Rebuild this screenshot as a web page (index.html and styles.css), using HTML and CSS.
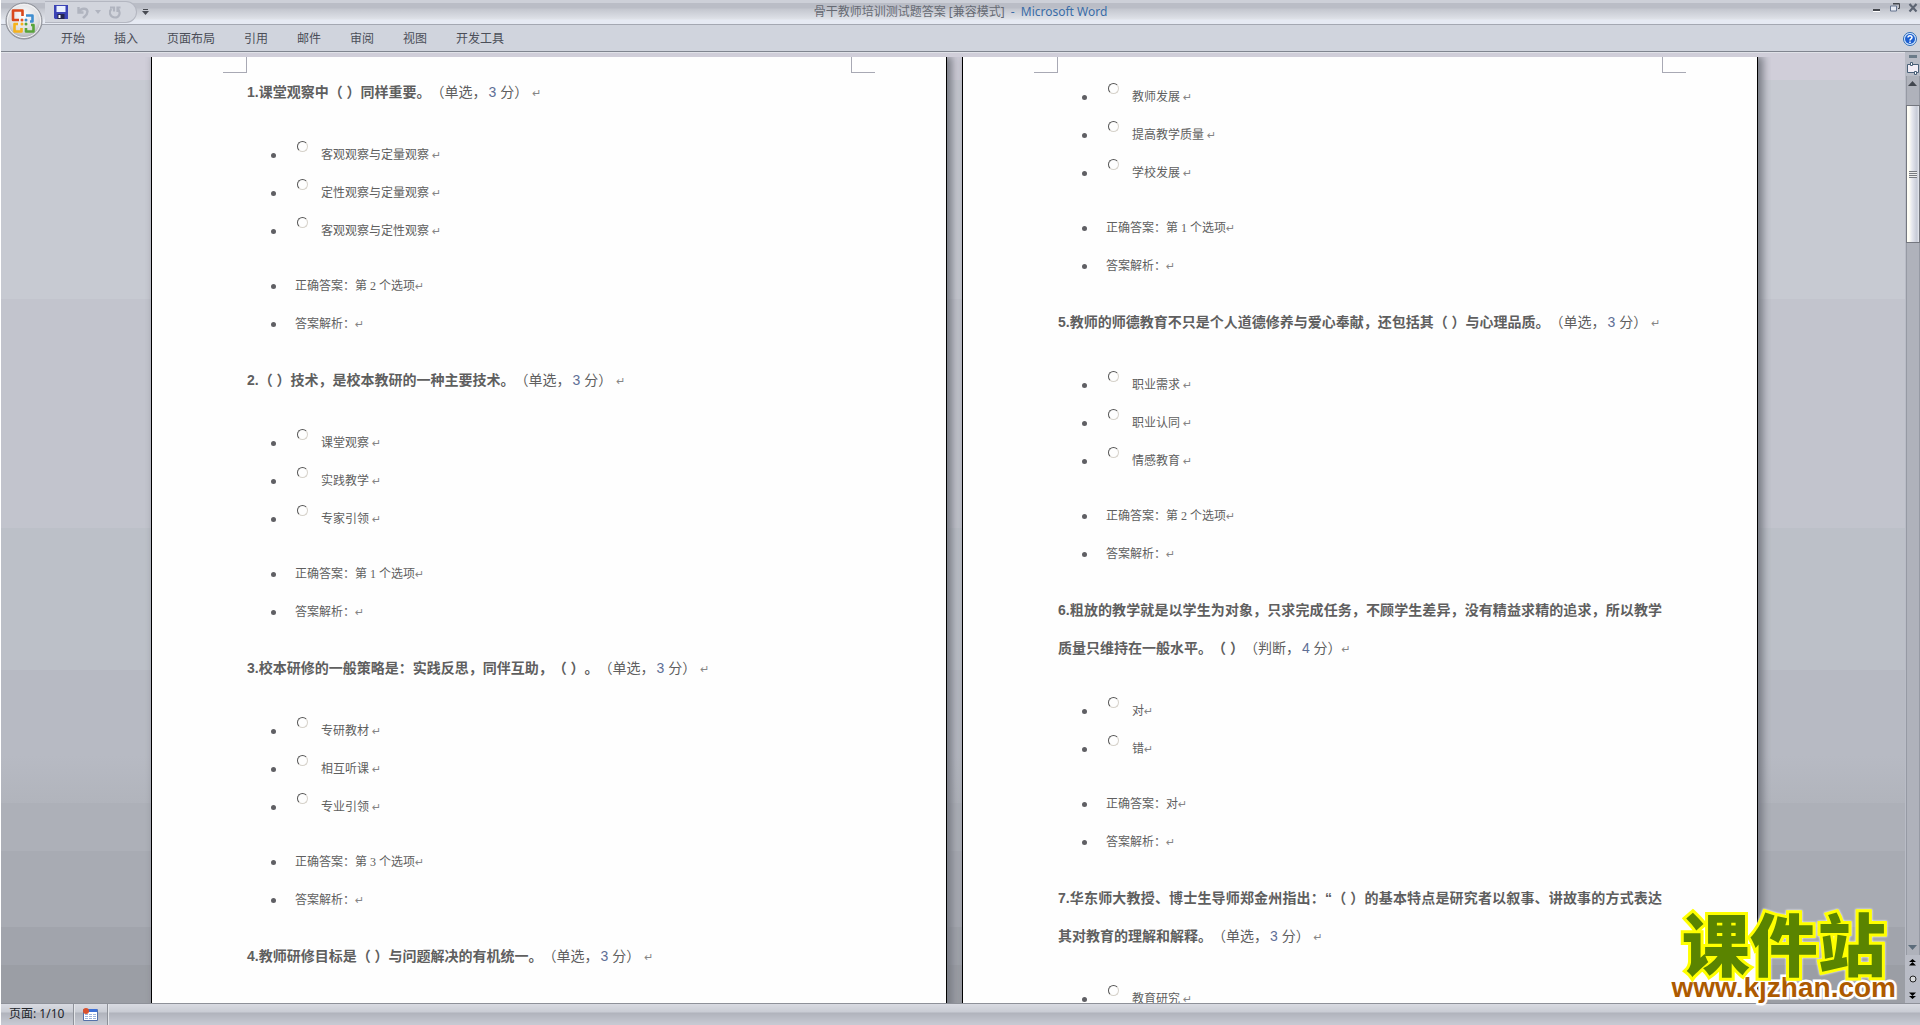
FILE: index.html
```html
<!DOCTYPE html>
<html lang="zh-CN">
<head>
<meta charset="utf-8">
<title>骨干教师培训测试题答案 [兼容模式] - Microsoft Word</title>
<link rel="stylesheet" href="styles.css">
</head>
<body>
<div class="window">
  <header class="titlebar">
    <button class="office" aria-label="Office">
      <svg width="38" height="38" viewBox="0 0 38 38">
        <defs><radialGradient id="orb" cx=".5" cy=".35" r=".7"><stop offset="0" stop-color="#fff"/><stop offset=".6" stop-color="#dcdde0"/><stop offset="1" stop-color="#9a9ca2"/></radialGradient></defs>
        <circle cx="19" cy="19" r="18" fill="url(#orb)" stroke="#8b8e96"/>
        <circle cx="19" cy="19" r="16.5" fill="none" stroke="#f4f4f6"/>
        <g fill="none" stroke-width="2.600" stroke-linejoin="round">
          <path d="M14 18H8V8.500h9.500V14" stroke="#d9481c"/>
          <path d="M21 13.500h6.500v6H25" stroke="#3f8ed0"/>
          <path d="M16.500 26v3.500H9.500V22H13" stroke="#f6b21b"/>
          <path d="M21 26v3.500h7.500V23H26" stroke="#58a43a"/>
        </g>
        <circle cx="17" cy="18" r="1.500" fill="#e5551f"/><circle cx="21" cy="18" r="1.500" fill="#3f8ed0"/>
        <circle cx="17" cy="22" r="1.500" fill="#f6b21b"/><circle cx="21" cy="22" r="1.500" fill="#58a43a"/>
      </svg>
    </button>
    <div class="left">
      <div class="quick">
        <button aria-label="保存"><svg width="14" height="14" viewBox="0 0 14 14"><path d="M0 0h14v14H1l-1-1z" fill="#3b43b5"/><path d="M2.500 1h9v6h-9z" fill="#e9f0ff"/><path d="M3.500 9h7v5h-7z" fill="#23254f"/><path d="M4.500 10h2v3h-2z" fill="#fff"/></svg></button>
        <button class="undo" aria-label="撤销"><svg width="12" height="13" viewBox="0 0 12 13"><path d="M1.500 1v5.500h5M2 6C4 2 10 1.500 10.500 5.500 10.500 9 8 10 6 12" fill="none" stroke="#b0b4bf" stroke-width="2.400"/></svg><svg width="6" height="4" viewBox="0 0 6 4"><path d="M0 0h6L3 4z" fill="#b0b4bf"/></svg></button>
        <button class="redo" aria-label="重复"><svg width="12" height="13" viewBox="0 0 12 13"><path d="M2.500 3C-1 6 1.500 11.500 6 11.500S12 6.500 9 3M1 1.500h4v4M8.500 6V1.500h3" fill="none" stroke="#b0b4bf" stroke-width="2.200"/></svg></button>
      </div>
      <button class="more" aria-label="自定义快速访问工具栏"><svg width="7" height="6" viewBox="0 0 7 6"><path d="M1 0h5v1H1zM0 2h7L3.500 6z" fill="#484b52"/></svg></button>
    </div>
    <h1 class="caption">骨干教师培训测试题答案 [兼容模式] <span>-</span> <span>Microsoft Word</span></h1>
    <div class="controls">
      <button aria-label="最小化"><svg width="10" height="10" viewBox="0 0 10 10"><path d="M1 6h7v2H1z" fill="#45484e"/><path d="M1 8h7v1H1z" fill="#fff"/></svg></button>
      <button aria-label="还原"><svg width="10" height="10" viewBox="0 0 10 10"><path d="M3 .5h6.500v5H8M3 1h6" fill="none" stroke="#45484e"/><path d="M.5 3h6v5h-6z" fill="#e6eaf3" stroke="#66758f"/></svg></button>
      <button aria-label="关闭"><svg width="10" height="10" viewBox="0 0 10 10"><path d="M1.500 1l7 7.500M8.500 1l-7 7.500" stroke="#5d6573" stroke-width="2.200"/></svg></button>
    </div>
  </header>

  <nav class="tabs">
    <button>开始</button><button>插入</button><button>页面布局</button><button>引用</button><button>邮件</button><button>审阅</button><button>视图</button><button>开发工具</button>
    <button class="help" aria-label="帮助"><svg width="14" height="14" viewBox="0 0 14 14"><circle cx="7" cy="7" r="6.500" fill="#d9ecff" stroke="#2c69b5"/><circle cx="7" cy="7" r="5" fill="#1d5fd0"/><path d="M5 5.500c0-2.500 4-2.500 4 0C9 7 7 6.800 7 8.500M7 9.500v1.500" fill="none" stroke="#fff" stroke-width="1.500"/></svg></button>
  </nav>

  <main class="workspace">
    <div class="desk">
      <article class="page">
        <div class="crops"><i></i><i></i></div>
        <section class="question">
          <h2>1.课堂观察中（ ）同样重要。<span>（单选，<b>3</b> 分） <em>↵</em></span></h2>
          <ul class="options">
            <li><input type="radio" name="q1" id="q1a"><label for="q1a">客观观察与定量观察 <em>↵</em></label></li>
            <li><input type="radio" name="q1" id="q1b"><label for="q1b">定性观察与定量观察 <em>↵</em></label></li>
            <li><input type="radio" name="q1" id="q1c"><label for="q1c">客观观察与定性观察 <em>↵</em></label></li>
          </ul>
          <ul class="answers"><li><p>正确答案：第 2 个选项<em>↵</em></p></li><li><p>答案解析：<em>↵</em></p></li></ul>
        </section>
        <section class="question">
          <h2>2.（ ）技术，是校本教研的一种主要技术。<span>（单选，<b>3</b> 分） <em>↵</em></span></h2>
          <ul class="options">
            <li><input type="radio" name="q2" id="q2a"><label for="q2a">课堂观察 <em>↵</em></label></li>
            <li><input type="radio" name="q2" id="q2b"><label for="q2b">实践教学 <em>↵</em></label></li>
            <li><input type="radio" name="q2" id="q2c"><label for="q2c">专家引领 <em>↵</em></label></li>
          </ul>
          <ul class="answers"><li><p>正确答案：第 1 个选项<em>↵</em></p></li><li><p>答案解析：<em>↵</em></p></li></ul>
        </section>
        <section class="question">
          <h2>3.校本研修的一般策略是：实践反思，同伴互助，（ ）。<span>（单选，<b>3</b> 分） <em>↵</em></span></h2>
          <ul class="options">
            <li><input type="radio" name="q3" id="q3a"><label for="q3a">专研教材 <em>↵</em></label></li>
            <li><input type="radio" name="q3" id="q3b"><label for="q3b">相互听课 <em>↵</em></label></li>
            <li><input type="radio" name="q3" id="q3c"><label for="q3c">专业引领 <em>↵</em></label></li>
          </ul>
          <ul class="answers"><li><p>正确答案：第 3 个选项<em>↵</em></p></li><li><p>答案解析：<em>↵</em></p></li></ul>
        </section>
        <section class="question">
          <h2>4.教师研修目标是（ ）与问题解决的有机统一。<span>（单选，<b>3</b> 分） <em>↵</em></span></h2>
        </section>
      </article>

      <article class="page continued">
        <div class="crops"><i></i><i></i></div>
        <section class="question">
          <ul class="options">
            <li><input type="radio" name="q4" id="q4a"><label for="q4a">教师发展 <em>↵</em></label></li>
            <li><input type="radio" name="q4" id="q4b"><label for="q4b">提高教学质量 <em>↵</em></label></li>
            <li><input type="radio" name="q4" id="q4c"><label for="q4c">学校发展 <em>↵</em></label></li>
          </ul>
          <ul class="answers"><li><p>正确答案：第 1 个选项<em>↵</em></p></li><li><p>答案解析：<em>↵</em></p></li></ul>
        </section>
        <section class="question">
          <h2>5.教师的师德教育不只是个人道德修养与爱心奉献，还包括其（ ）与心理品质。<span>（单选，<b>3</b> 分） <em>↵</em></span></h2>
          <ul class="options">
            <li><input type="radio" name="q5" id="q5a"><label for="q5a">职业需求 <em>↵</em></label></li>
            <li><input type="radio" name="q5" id="q5b"><label for="q5b">职业认同 <em>↵</em></label></li>
            <li><input type="radio" name="q5" id="q5c"><label for="q5c">情感教育 <em>↵</em></label></li>
          </ul>
          <ul class="answers"><li><p>正确答案：第 2 个选项<em>↵</em></p></li><li><p>答案解析：<em>↵</em></p></li></ul>
        </section>
        <section class="question">
          <h2>6.粗放的教学就是以学生为对象，只求完成任务，不顾学生差异，没有精益求精的追求，所以教学质量只维持在一般水平。（ ）<span>（判断，<b>4</b> 分）<em>↵</em></span></h2>
          <ul class="options">
            <li><input type="radio" name="q6" id="q6a"><label for="q6a">对<em>↵</em></label></li>
            <li><input type="radio" name="q6" id="q6b"><label for="q6b">错<em>↵</em></label></li>
          </ul>
          <ul class="answers"><li><p>正确答案：对<em>↵</em></p></li><li><p>答案解析：<em>↵</em></p></li></ul>
        </section>
        <section class="question">
          <h2>7.华东师大教授、博士生导师郑金州指出：“（ ）的基本特点是研究者以叙事、讲故事的方式表达其对教育的理解和解释。<span>（单选，<b>3</b> 分） <em>↵</em></span></h2>
          <ul class="options">
            <li><input type="radio" name="q7" id="q7a"><label for="q7a">教育研究 <em>↵</em></label></li>
          </ul>
        </section>
      </article>
    </div>
    <aside class="scroll">
      <svg class="split" width="8" height="3"><path d="M0 0h8v3H0z" fill="#6b7b89"/></svg>
      <button class="ruler" aria-label="标尺"><svg width="12" height="13" viewBox="0 0 12 13"><path d="M.5 2.500h11v8H.5z" fill="#f3eef6" stroke="#4a6078"/><path d="M3.500.5h2v3h-2zM7.500 9.500h2v3h-2z" fill="#fff" stroke="#4a6078"/></svg></button>
      <div class="track">
        <svg width="9" height="5"><path d="M0 5L4.500 0 9 5z" fill="#42474f"/></svg>
        <div class="thumb"><i></i></div>
        <svg class="down" width="9" height="5"><path d="M0 0h9L4.500 5z" fill="#5c6c7b"/></svg>
      </div>
      <div class="browse">
        <svg width="7" height="7"><path d="M0 3L3.500 0 7 3zM0 6.500L3.500 3 7 6.500z"/></svg>
        <svg width="8" height="8"><circle cx="4" cy="4" r="3" fill="#d8dadd" stroke="#222"/></svg>
        <svg width="7" height="7"><path d="M0 .5h7L3.500 4zM0 4h7L3.500 7z"/></svg>
      </div>
    </aside>
  </main>

  <footer class="status">
    <span class="cell">页面: 1/10</span>
    <button class="cell macro" aria-label="录制宏"><svg width="15" height="13" viewBox="0 0 15 13"><path d="M.5 1.500h14v11H.5z" fill="#fff" stroke="#5671a8"/><path d="M1 1h13v3H1z" fill="#3c6fd6"/><path d="M2 6.500h11M2 8.500h11M2 10.500h11" stroke="#9db3dd" stroke-dasharray="3 1"/><circle cx="3" cy="3" r="3" fill="#d9512c"/></svg></button>
  </footer>

  <a class="watermark" href="#"><strong>课件站</strong><span>www.kjzhan.com</span></a>
</div>
</body>
</html>
```
FILE: styles.css
```css
* { box-sizing: border-box; }
html, body { height: 100%; }
body {
  margin: 0;
  overflow: hidden;
  font: 12px/16px "Noto Sans", "Noto Sans CJK SC", sans-serif;
  color: #4b4e58;
}
button { border: 0; padding: 0; background: none; font: inherit; color: inherit; }
svg { display: block; }
em { font-style: normal; }

.window {
  position: relative;
  display: flex;
  flex-direction: column;
  height: 100%;
  padding-left: 1px;
  background: #fff;
}

.titlebar {
  display: grid;
  grid-template-columns: 1fr auto 1fr;
  align-items: center;
  height: 25px;
  border-bottom: 1px solid #a4a8b2;
  background: linear-gradient(#cdd0d8 0 3px, #babdc6 3px 8px, #c4c7cf 9px, #d6d9e0 16px, #dfe2e8 19px, #e6eaf3 20px);
}
.office { position: absolute; left: 5px; top: 2px; z-index: 2; }
.left { display: flex; align-items: center; }
.quick {
  display: flex;
  align-items: center;
  width: 92px;
  height: 22px;
  margin-left: 44px;
  padding-left: 9px;
  border: 1px solid #b4b7c1;
  border-left: 0;
  border-radius: 0 11px 11px 0;
  background: #d2d5dd;
}
.undo { display: flex; align-items: center; gap: 6px; margin-left: 9px; }
.redo { margin-left: 8px; }
.more { margin-left: 5px; }
.caption {
  margin: 0;
  font-size: 12px;
  font-weight: 400;
  line-height: 16px;
  color: #666a73;
}
.caption span { margin-left: 3px; color: #3a6da8; }
.controls { display: flex; justify-content: flex-end; gap: 8px; padding-right: 2px; margin-bottom: 8px; }

.tabs {
  display: flex;
  align-items: center;
  gap: 29px;
  height: 27px;
  padding: 2px 3px 0 60px;
  border-bottom: 1px solid #80858f;
  background: #d0d4dd;
}
.help { margin-left: auto; }

.workspace {
  display: flex;
  flex: 1;
  min-height: 0;
  overflow: hidden;
  background: linear-gradient(#d0ced9 28px, #c7cad2 28px 26%, #c2c4cd 26% 50%, #bcc0c8 50% 65%, #b7bac3 65% 74%, #b1b4bc 79%, #adb0b8 79% 84%, #a8abb3 84% 92%, #a1a4ac 92% 96%, #9b9ea5 96%);
}
.desk {
  display: flex;
  flex: 1;
  gap: 15px;
  padding: 4px 147px 0 150px;
  overflow: hidden;
  border-top: 1px solid #e0e2e8;
}
.page {
  flex: 1;
  height: max-content;
  min-height: 100%;
  padding-bottom: 40px;
  border: solid #000;
  border-width: 0 1px;
  background: #fefefe;
  box-shadow: 4px 0 8px 1px #777a83;
  clip-path: inset(0 -13px 0 -6px);
  color: #5f5f5f;
}
.crops {
  display: flex;
  justify-content: space-between;
  height: 16px;
  margin: 0 71px;
}
.crops i { width: 24px; border: solid #a8a9b4; border-width: 0 1px 1px 0; }
.crops i + i { border-width: 0 0 1px 1px; }
.continued .crops { margin-bottom: 5px; }

.question { margin: 0 95px 18px; }
.question h2 {
  margin: 0 0 25px;
  font: 700 14px/38px "Liberation Sans", "Noto Sans CJK SC", sans-serif;
  text-align: justify;
  text-spacing-trim: space-all;
}
.question h2 span { font-weight: 400; }
.question h2 b { margin-left: 2px; font-weight: 400; color: #5f6f96; }
.question em { font: 11px/11px "DejaVu Sans", sans-serif; color: #858585; }
.question ul {
  margin: 0;
  padding: 0 0 0 48px;
  list-style: none;
  font: 12px/38px "Liberation Serif", "Noto Sans CJK SC", serif;
}
.question li { display: flex; align-items: center; height: 38px; }
.question li::before {
  content: "";
  width: 5px;
  height: 5px;
  margin: 0 19px 0 -24px;
  border-radius: 50%;
  background: #5f5f64;
}
.question p { margin: 0; }
.question .options { margin-bottom: 17px; }
.options input {
  appearance: none;
  width: 11px;
  height: 11px;
  margin: 0 13px 17px 2px;
  border: 1px solid;
  border-color: #555 #d6d2ca #d6d2ca #555;
  border-radius: 50%;
}
/* lets the paragraph mark hang past the right margin instead of wrapping */
.question h2 em { margin-right: -10px; }

.scroll {
  display: flex;
  flex-direction: column;
  align-items: center;
  width: 15px;
  padding-top: 3px;
  background: #b9bcc6;
}
.ruler { padding: 4px 0 1px; }
.track {
  display: flex;
  flex: 1;
  flex-direction: column;
  align-items: center;
  width: 14px;
  padding: 5px 0;
  border: solid #969aa4;
  border-width: 0 1px;
  background: #afb2bb;
}
.thumb {
  display: flex;
  align-items: center;
  justify-content: center;
  width: 14px;
  height: 138px;
  margin-top: 19px;
  border: 1px solid #74777f;
  background: linear-gradient(90deg, #fffef5 2px, #e6e7ee 5px, #c6cad6 10px, #e8eaf0);
}
.thumb i { width: 8px; height: 7px; background: repeating-linear-gradient(#777a80 0 1px, #eee 1px 2px); }
.down { margin-top: auto; }
.browse { display: flex; flex-direction: column; align-items: center; gap: 9px; padding: 4px 0; }

.status {
  display: flex;
  height: 22px;
  border-top: 1px solid #8e9199;
  background: linear-gradient(#d9dbe2, #c9ccd4 8px, #b0b3bc 9px, #c6c9d2 20px);
  color: #22252b;
}
.cell { padding: 2px 9px 0 8px; border-right: 1px solid #8e9199; box-shadow: 1px 0 #e4e6ea; }
.macro { padding: 0 9px; }

.watermark {
  position: absolute;
  right: 24px;
  bottom: 23px;
  display: flex;
  flex-direction: column;
  align-items: center;
  text-decoration: none;
  white-space: nowrap;
  paint-order: stroke fill;
}
.watermark strong {
  font: 900 68px/64px "Noto Sans CJK SC", sans-serif;
  color: #5a8400;
  -webkit-text-stroke: 6px #ff0;
  filter: drop-shadow(0 0 1px #fff);
}
.watermark span {
  font: 700 28px/28px "Liberation Sans", sans-serif;
  color: #ad5a00;
  -webkit-text-stroke: 5px #fff;
}
```
